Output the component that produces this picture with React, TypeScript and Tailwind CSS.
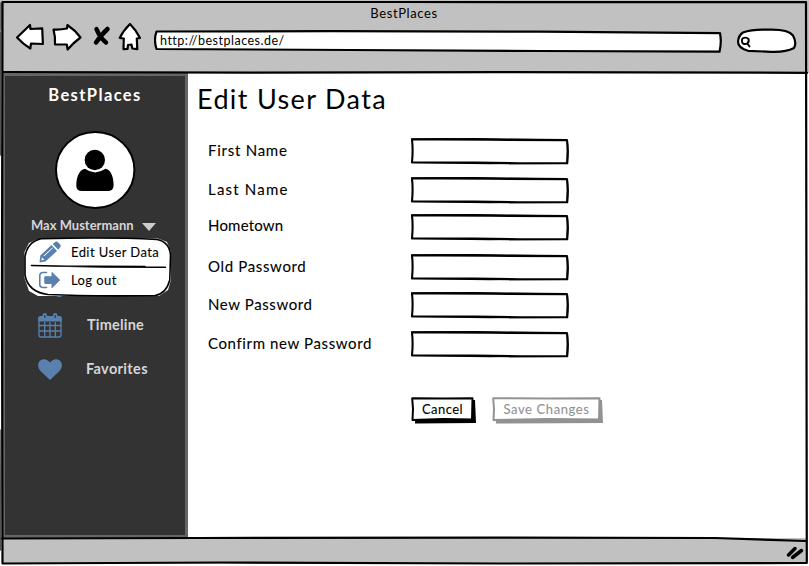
import React from "react";

const ink = { fill: "none", stroke: "#000", strokeLinecap: "round", strokeLinejoin: "round" } as const;

function Toolbar() {
  return (
    <header className="flex h-[73px] shrink-0 flex-col bg-[#c1c1c1]">
      <div className="h-[27px] pr-px pt-[5px] text-center text-[13px] leading-[17px] tracking-[0.6px]">BestPlaces</div>
      <div className="flex pl-[15px]">
        <svg className="h-[30px] w-[132px] shrink-0 -mt-[5px]" viewBox="15 22 132 30" {...ink} strokeWidth="2.200">
          <path fill="#fff" d="M17 37.500 30 25 30.500 29 42.200 28.300 42.900 44 31 43.500 30.300 48.500Q23 44 17 37.500Z" />
          <path fill="#fff" d="M53.500 29.500Q60 30 67 28.500L67.400 25Q75 30 80.500 37.500 73 43 67.600 49.500L66.800 44.500 55 44.300Q55.500 37 53.500 29.500Z" />
          <path strokeWidth="4.500" d="M96.500 29Q100 38 106 42.500M107.500 29Q102 34 96 42.500" />
          <path fill="#fff" d="M130 24Q136 30 140 38L136.800 38.500 137.300 49.200 132.300 48.500 131.500 44.500 128 45 127.500 49 123.500 49.200 123.800 38.500 119.700 38Q123 31 130 24Z" />
        </svg>
        <div className="relative ml-[7px] mt-[3px] h-[24px] w-[568px]">
          <svg className="absolute inset-0 h-[24px] w-[568px]" viewBox="154 30 568 24" {...ink} strokeWidth="2.200">
            <path fill="#fff" d="M156.500 31.500L330 31.200 540 31.600 720 33.200Q721.800 42 719.500 51.700L540 51 350 50 156.500 49Q153.500 40 156.500 31.500Z" />
          </svg>
          <span className="relative block pl-[6px] pt-[3px] text-[12.5px] leading-[16px] tracking-[0.5px]">http://bestplaces.de/</span>
        </div>
        <svg className="ml-[14px] mt-[1px] h-[26px] w-[62px]" viewBox="736 28 62 26" {...ink} strokeWidth="2.200">
          <path fill="#fff" d="M743 32.500Q752 29 768 29.700 788 29 793 35.500 797 43 794 48 785 52.500 771 51.800L748 50.800Q738 48 738 41.500 738.500 35.500 743 32.500Z" />
          <path strokeWidth="1.900" d="M742.500 38.500Q746 36.500 748.500 39 749.500 42 747 43.600 742.500 45 742 41.500Q741.700 40 742.500 38.500ZM747.300 43.500 749.500 46.500" />
        </svg>
      </div>
    </header>
  );
}

function Avatar() {
  return (
    <svg className="mx-auto mt-[26px] h-[80px] w-[82px]" viewBox="54 131 82 80">
      <ellipse cx="95.200" cy="170" rx="39.200" ry="38" fill="#fff" stroke="#000" strokeWidth="2" />
      <ellipse cx="94.800" cy="160" rx="10.200" ry="10.200" />
      <path d="M85 168.800Q95 176 105.500 168.800C112 170 113.800 180 113.600 185.500Q113.400 191 107.500 191L82 191Q76.200 191 76.300 185.500C76.300 179 78.500 169.500 85 168.800Z" />
    </svg>
  );
}

function UserMenu() {
  return (
    <div className="relative ml-[18px] h-[60px] w-[150px]">
      <svg className="absolute inset-0 h-[60px] w-[150px]" viewBox="23 237 150 60" {...ink}>
        <path fill="#fff" stroke="none" d="M38 239 29 243 24.500 252V278L29 291 38 296H159L168 290 171 280V252L167 242 158 238.500Z" />
        <path fill="#fff" strokeWidth="1.600" d="M41 238.700Q110 237 157 239.500 169.500 242 170.500 255L169.800 280Q166 294 155 295.500 90 296.500 48 294.500 28 292 25 275L25 257Q27 242 41 238.700Z" />
        <path strokeWidth="1.500" d="M31.500 265.500 103 267 165.500 267.300M45 266 145 266.500" />
        <path fill="#5a80ad" stroke="none" d="M56.500 296H62L59.300 298Z" />
      </svg>
      <div className="relative flex h-[29px] items-center pl-[16px]">
        <svg className="h-[22px] w-[22px]" viewBox="39 241 22 22" fill="#5a80ad">
          <path fillRule="evenodd" d="M40.300 255.500 51.500 245 57 251 45.500 261.500 39.500 262.500ZM52.700 244 55.500 241.700Q56.800 241 58 242.200L60.500 245Q61.200 246 60.200 247.200L58.200 249.800ZM41.800 257.300 41.400 260.400 44.300 259.800ZM43.500 255.700 52.500 247.500 53 248 44.200 256.300Z" />
        </svg>
        <span className="relative ml-[10px] whitespace-nowrap text-[13px] leading-[18px] tracking-[0.42px] [-webkit-text-stroke:0.1px_black]">Edit User Data</span>
      </div>
      <div className="relative flex h-[27px] items-center pl-[16px]">
        <svg className="h-[20px] w-[22px]" viewBox="39 270.500 22 20" fill="none" stroke="#5a80ad">
          <path strokeWidth="1.600" strokeLinecap="round" d="M46.500 273H43Q39.800 273 39.800 276V285Q39.800 288 43 288H46.500" />
          <path fill="#5a80ad" strokeWidth="1" strokeLinejoin="round" d="M44.800 277.300H52V273L59.700 280.500 52 288.200V283.900H44.800Z" />
        </svg>
        <span className="relative ml-[10px] text-[13px] leading-[18px] tracking-[0.4px] [-webkit-text-stroke:0.1px_black]">Log out</span>
      </div>
    </div>
  );
}

function Sidebar() {
  return (
    <aside className="ml-[2px] h-[465px] w-[186px] shrink-0 border-[3px] border-[#666] bg-[#333] text-[#d5d5d5]">
      <h2 className="pt-[9px] text-center text-[16.5px] font-bold leading-[20px] tracking-[1.4px] text-white">BestPlaces</h2>
      <Avatar />
      <div className="mt-[3px] flex h-[22px] items-center pl-[26px]">
        <span className="w-[111px] whitespace-nowrap text-[13px] font-bold leading-[20px]">Max Mustermann</span>
        <svg className="mt-[3px] h-[8px] w-[14px]" viewBox="0 0 14 8"><path fill="#ccc" d="M0 0H14L7 8Z" /></svg>
      </div>
      <div className="mt-px text-black"><UserMenu /></div>
      <nav>
        <a className="mt-[14px] flex h-[27px] items-center pl-[33px]">
          <svg className="h-[26px] w-[24px] shrink-0" viewBox="38 312 24 26" fill="none" stroke="#5a80ad">
            <path strokeWidth="1.300" d="M39 317V335Q39 337 41 337H59Q61 337 61 335V317M39 325.500H61M39 331H61M44.700 322V337M50 322V337M55.300 322V337" />
            <path fill="#5a80ad" stroke="none" d="M38.300 321.500V318Q38.300 316 40.500 316H42.500V315Q43 313 44.800 313 46.800 313 47 315V316H53V315Q53.200 313 55.200 313 57 313 57.500 315V316H59.500Q61.700 316 61.700 318V321.500Z" />
            <path stroke="#333" strokeWidth="1.100" d="M44.800 315V318M55.200 315V318" />
          </svg>
          <span className="ml-[25px] text-[14.5px] font-bold tracking-[0.2px]">Timeline</span>
        </a>
        <a className="mt-[17px] flex h-[27px] items-center pl-[33px]">
          <svg className="h-[22px] w-[24px] shrink-0" viewBox="38 358.500 24 22">
            <path fill="#5a80ad" d="M50 380.500 40 371Q37.200 367.500 38.500 363.500C40.500 358.300 47.500 359 50 363.200C52.500 359 59.500 358.300 61.500 363.500Q62.800 367.500 60 371Z" />
          </svg>
          <span className="ml-[24px] text-[14.5px] font-bold tracking-[0.35px]">Favorites</span>
        </a>
      </nav>
    </aside>
  );
}

function Field({ label, className, labelClass }: { label: string; className: string; labelClass: string }) {
  return (
    <label className={`flex h-[26px] items-center ${className}`}>
      <span className={`relative w-[202px] whitespace-nowrap text-[15px] leading-[20px] [-webkit-text-stroke:0.1px_black] ${labelClass}`}>{label}</span>
      <svg className="h-[28px] w-[160px]" viewBox="0 0 160 28" {...ink}>
        <path strokeWidth="2.100" d="M2 2.500Q40 2.200 80 2.800L157 3.300Q158.700 13 157.200 26.300L110 26.300 65 25.500 2 25.300Q3.200 13 2 2.500Z" />
        <path strokeWidth="1.200" d="M1.500 1.800 65 1.700 157 2.700 157.300 14 156.800 26.300 80 26.600 1.500 25.700" />
      </svg>
    </label>
  );
}

function SketchButton({ children, disabled, width, className }: { children: React.ReactNode; disabled?: boolean; width: number; className: string }) {
  const color = disabled ? "#929292" : "#000";
  return (
    <button disabled={disabled} className={`relative h-[27px] text-[13px] [-webkit-text-stroke:0.1px] ${className}`}>
      <svg className="absolute inset-0 h-full w-full" viewBox={`0 0 ${width} 27`}>
        <path fill={color} d={`M5 4 ${width - 1} 3 ${width} 26 4 26.500Z`} />
        <path fill="#fff" stroke={color} strokeWidth="2" strokeLinejoin="round" d={`M1.200 1.200 ${width / 2} 1.500 ${width - 3.500} 1.200 ${width - 4} 22.500 ${width / 2} 22 1.500 23 2 12Z`} />
      </svg>
      <span className="relative -left-[1px] -top-[2px] block whitespace-nowrap text-center leading-[24px]">{children}</span>
    </button>
  );
}

function WindowFrame() {
  return (
    <svg className="pointer-events-none absolute inset-0 h-[566px] w-[809px]" viewBox="0 0 809 566" {...ink}>
      <path stroke="#555" strokeWidth="1.500" d="M1 3V30M.5 32V155M1 430 .5 550" />
      <path strokeWidth="2.200" d="M2.500 2 400 2 806 2.200 806.300 200 806.800 563 500 563.500 220 562.500 2.500 563.500 2 280Z" />
      <path strokeWidth="2.200" d="M3 72 250 72.700 500 72.200 807 72.800M2 538.500 200 538 500 537.700 715 538 806 541" />
      <path strokeWidth="3.500" d="M788.500 555 795 548.500M792.500 557.500 801.500 550.500" />
    </svg>
  );
}

export default function App() {
  return (
    <div className="relative flex h-[566px] w-[809px] flex-col overflow-hidden bg-white text-black [font-family:Lato,'Noto_Sans',sans-serif]">
      <Toolbar />
      <div className="flex h-[465px] shrink-0">
        <Sidebar />
        <main className="flex-1 pl-[9px]">
          <h1 className="pt-[10px] text-[27px] leading-[32px] tracking-[1.35px]">Edit User Data</h1>
          <form className="pl-[11px] pt-[23px]">
            <Field label="First Name" className="" labelClass="-top-px tracking-[0.75px]" />
            <Field label="Last Name" className="mt-[13px]" labelClass="-top-px tracking-[1.2px]" />
            <Field label="Hometown" className="mt-[11px]" labelClass="-top-[2px] tracking-[0.2px]" />
            <Field label="Old Password" className="mt-[14px]" labelClass="-top-px tracking-[0.65px]" />
            <Field label="New Password" className="mt-[12px]" labelClass="-top-px tracking-[0.6px]" />
            <Field label="Confirm new Password" className="mt-[13px]" labelClass="-top-px tracking-[0.62px]" />
            <div className="mt-[40px] flex pl-[203px]">
              <SketchButton width={65} className="w-[65px] tracking-[0.45px]">Cancel</SketchButton>
              <SketchButton width={111} disabled className="ml-[16px] w-[111px] tracking-[0.6px] text-[#929292]">Save Changes</SketchButton>
            </div>
          </form>
        </main>
      </div>
      <footer className="mx-[3px] h-[26px] shrink-0 bg-[#c1c1c1]" />
      <WindowFrame />
    </div>
  );
}
